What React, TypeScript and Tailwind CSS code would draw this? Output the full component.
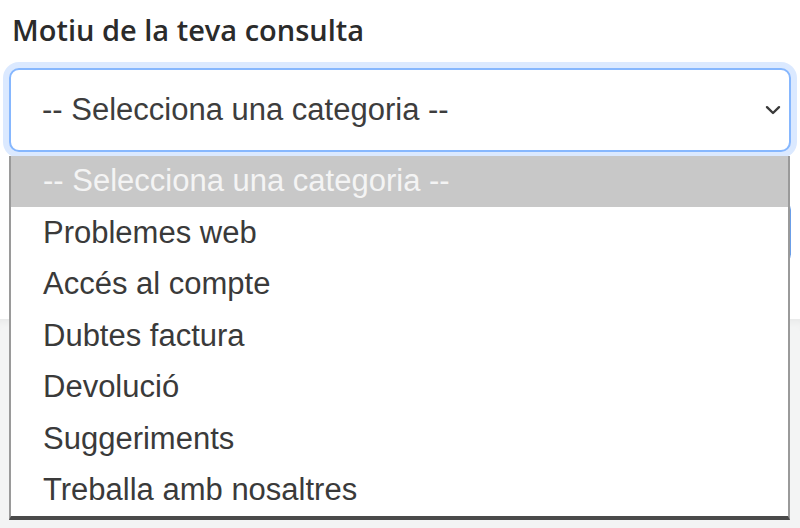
import React from "react";

const options = [
  "Problemes web",
  "Accés al compte",
  "Dubtes factura",
  "Devolució",
  "Suggeriments",
  "Treballa amb nosaltres",
];

export default function App() {
  return (
    <div className="relative h-[528px] w-[800px] overflow-hidden bg-white">
      {/* form behind the open dropdown */}
      <div className="px-[9px] pt-[9px]">
        <label
          className="block pl-[3px] text-[29px] font-semibold leading-[41px] text-[#2b2b2b]"
          style={{ fontFamily: '"Open Sans", sans-serif' }}
        >
          Motiu de la teva consulta
        </label>

        <div className="mt-[18px] flex h-[84px] w-[782px] items-center justify-between rounded-[10px] border-2 border-[#86b7fe] bg-white pl-[31px] pr-[8px] shadow-[0_0_0_6px_rgba(13,110,253,0.15)]">
          <span
            className="text-[31px] text-[#3d3d3d]"
            style={{ fontFamily: '"Liberation Sans", Arial, sans-serif' }}
          >
            -- Selecciona una categoria --
          </span>
          <svg width="16" height="16" viewBox="0 0 16 16">
            <path
              d="M2 5.2 8 11l6-5.8"
              fill="none"
              stroke="#3a3a3a"
              strokeWidth="2.4"
              strokeLinecap="round"
              strokeLinejoin="round"
            />
          </svg>
        </div>

        <div className="mt-[48px] h-[64px] w-[782px] rounded-[10px] border-2 border-[#6b9ee8]" />
      </div>

      <div className="mt-[55px] h-[300px] bg-[#f3f4f4] shadow-[inset_0_8px_8px_-6px_rgba(0,0,0,0.06)]" />

      {/* open select list */}
      <ul
        className="absolute left-[9px] top-[156px] w-[781px] border-x-2 border-b-[4px] border-x-[#9a9a9a] border-b-[#4a4a4a] bg-white text-[31px] text-[#3a3a3a]"
        style={{ fontFamily: '"Liberation Sans", Arial, sans-serif' }}
      >
        <li className="flex h-[51px] items-center bg-[#c8c8c8] pl-[32px] text-[#f4f4f4]">
          -- Selecciona una categoria --
        </li>
        {options.map((o) => (
          <li key={o} className="flex h-[51.5px] items-center pl-[32px]">
            {o}
          </li>
        ))}
      </ul>
    </div>
  );
}
